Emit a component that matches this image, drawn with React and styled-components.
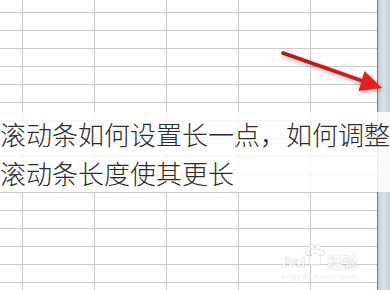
import React from "react";
import styled, { createGlobalStyle } from "styled-components";

const Global = createGlobalStyle`
  html, body { margin: 0; padding: 0; background: #ffffff; }
  body { font-family: "Noto Sans CJK SC", "Noto Sans", sans-serif; }
`;

const Screen = styled.div`
  position: relative;
  width: 390px;
  height: 290px;
  display: flex;
  overflow: hidden;
  background: #ffffff;
`;

const Sheet = styled.div`
  flex: 1;
  height: 100%;
  background-color: #ffffff;
  background-image:
    linear-gradient(to right, #c9c9c9 1px, transparent 1px),
    linear-gradient(to bottom, #cbcbcb 1px, transparent 1px);
  background-size: 72px 100%, 100% 18px;
  background-position: 22px 0, 0 12px;
`;

const ScrollBar = styled.div`
  width: 12px;
  height: 100%;
  border-left: 1px solid #6f7b8c;
  background: linear-gradient(to right, #c3ccd8 0%, #dbe1ea 45%, #c6cfdb 100%);
`;

const Caption = styled.div`
  position: absolute;
  left: 0;
  right: 0;
  top: 112px;
  height: 80px;
  padding-top: 2px;
  box-sizing: border-box;
  background: rgba(255, 255, 255, 0.86);
`;

const CaptionLine = styled.div`
  font-family: "Noto Sans CJK SC Light", "Noto Sans CJK SC DemiLight", "Noto Sans CJK SC", "Noto Sans", sans-serif;
  font-size: 26px;
  font-weight: 300;
  line-height: 39px;
  color: #2b2b2b;
  white-space: nowrap;
  letter-spacing: 0;
`;

const ArrowLayer = styled.svg`
  position: absolute;
  left: 0;
  top: 0;
  width: 390px;
  height: 290px;
  pointer-events: none;
  filter: drop-shadow(1px 2px 2px rgba(120, 0, 0, 0.35));
`;

const Watermark = styled.div`
  position: absolute;
  left: 282px;
  top: 242px;
  display: flex;
  flex-direction: column;
  align-items: flex-start;
  opacity: 0.8;
`;

const MarkRow = styled.div`
  display: flex;
  align-items: flex-end;
  height: 27px;
`;

const MarkLatin = styled.span`
  font-family: "Liberation Sans", Arial, sans-serif;
  font-weight: 700;
  font-size: 15px;
  line-height: 15px;
  color: #ffffff;
  text-shadow: 0 0 1px rgba(0, 0, 0, 0.3), 0 0 1px rgba(0, 0, 0, 0.3);
`;

const MarkCJK = styled.span`
  font-family: "Noto Sans CJK SC", sans-serif;
  font-weight: 700;
  font-size: 15px;
  line-height: 15px;
  margin-left: 2px;
  color: #ffffff;
  text-shadow: 0 0 1px rgba(0, 0, 0, 0.28), 0 0 1px rgba(0, 0, 0, 0.28);
`;

const MarkSub = styled.span`
  font-family: "Liberation Sans", Arial, sans-serif;
  font-size: 8px;
  line-height: 10px;
  margin-top: 3px;
  letter-spacing: 0.6px;
  color: #ffffff;
  text-shadow: 0 0 1px rgba(0, 0, 0, 0.28);
`;

function Paw() {
  return (
    <svg width="20" height="26" viewBox="0 0 20 26">
      <g fill="#ffffff" stroke="#cdcdcd" strokeWidth="0.8">
        <ellipse cx="7" cy="4" rx="2.3" ry="3" />
        <ellipse cx="13" cy="4" rx="2.3" ry="3" />
        <ellipse cx="3" cy="10" rx="2.2" ry="2.8" />
        <ellipse cx="17" cy="10" rx="2.2" ry="2.8" />
        <path d="M10 10 C6 10 3 16 4 20 C5 23 8 22 10 21.5 C12 22 15 23 16 20 C17 16 14 10 10 10 Z" />
      </g>
    </svg>
  );
}

export default function App() {
  return (
    <>
      <Global />
      <Screen>
        <Sheet />
        <ScrollBar />
        <ArrowLayer viewBox="0 0 390 290">
          <defs>
            <linearGradient id="shaft" x1="283" y1="53" x2="365" y2="82" gradientUnits="userSpaceOnUse">
              <stop offset="0" stopColor="#b3191c" />
              <stop offset="1" stopColor="#cf1d1e" />
            </linearGradient>
          </defs>
          <line x1="283" y1="53" x2="364" y2="81.5" stroke="url(#shaft)" strokeWidth="3.6" strokeLinecap="round" />
          <polygon points="382,88 358.5,91 364.5,71" fill="#e4201e" />
        </ArrowLayer>
        <Caption>
          <CaptionLine>滚动条如何设置长一点，如何调整</CaptionLine>
          <CaptionLine>滚动条长度使其更长</CaptionLine>
        </Caption>
        <Watermark>
          <MarkRow>
            <MarkLatin>Bai</MarkLatin>
            <Paw />
            <MarkCJK>经验</MarkCJK>
          </MarkRow>
          <MarkSub>jingyan.baidu.com</MarkSub>
        </Watermark>
      </Screen>
    </>
  );
}
